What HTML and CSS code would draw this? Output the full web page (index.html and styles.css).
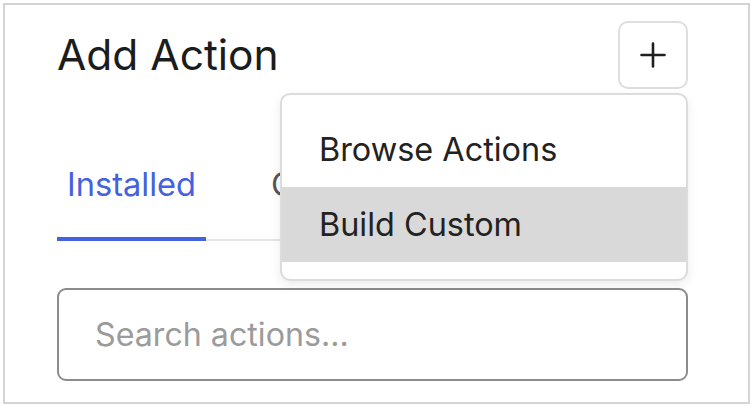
FILE: index.html
```html
<!DOCTYPE html>
<html lang="en">
<head>
<meta charset="utf-8">
<title>Add Action</title>
<link rel="stylesheet" href="styles.css">
</head>
<body>
<div class="frame">
  <div class="header">
    <h1 class="title">Add Action</h1>
    <button class="add-btn" aria-label="Add">
      <svg width="26" height="26" viewBox="0 0 26 26" aria-hidden="true">
        <path d="M13 1.5V24.5M1.5 13H24.5" stroke="#1f1f1f" stroke-width="2.6" stroke-linecap="round" fill="none"/>
      </svg>
    </button>
    <div class="menu">
      <div class="menu-item">Browse Actions</div>
      <div class="menu-item active">Build Custom</div>
    </div>
  </div>
  <div class="tabs">
    <div class="tab selected">Installed</div>
    <div class="tab">Custom</div>
  </div>
  <div class="search">
    <input class="search-input" type="text" placeholder="Search actions...">
  </div>
</div>
</body>
</html>
```
FILE: styles.css
```css
* { box-sizing: border-box; }
html, body { margin: 0; padding: 0; background: #fff; }
body { font-family: Inter, "Noto Sans", sans-serif; color: #1e1e1e; }

.frame {
  margin: 3px;
  width: 747px;
  height: 401px;
  border: 2px solid #d4d4d4;
  padding: 16px 60px 0 52px;
  overflow: hidden;
}

.header {
  position: relative;
  display: flex;
  align-items: center;
  justify-content: space-between;
  height: 68px;
}

.title {
  margin: 0;
  font-size: 42.5px;
  font-weight: 400;
  line-height: 52px;
  color: #1c1c1c;
}

.add-btn {
  width: 70px;
  height: 68px;
  padding: 0;
  border: 2px solid #dedede;
  border-radius: 10px;
  background: #fff;
  display: flex;
  align-items: center;
  justify-content: center;
}

.menu {
  position: absolute;
  top: 72px;
  right: 0;
  width: 408px;
  border: 2px solid #dcdcdc;
  border-radius: 10px;
  background: #fff;
  padding: 17px 0;
  box-shadow: 0 4px 12px rgba(0,0,0,0.08);
  z-index: 2;
  overflow: hidden;
}

.menu-item {
  height: 75px;
  display: flex;
  align-items: center;
  padding-left: 37px;
  font-size: 32.4px;
  color: #222;
}

.menu-item.active { background: #d9d9d9; }

.tabs {
  display: flex;
  gap: 55px;
  margin-top: 75px;
  box-shadow: inset 0 -2px 0 #e6e6e6;
}

.tab {
  padding: 0 10px 33px;
  font-size: 32.6px;
  line-height: 40px;
  color: #555;
  border-bottom: 4px solid transparent;
}

.tab.selected {
  color: #4661de;
  border-bottom-color: #4661de;
}

.search { margin-top: 47px; }

.search-input {
  display: block;
  width: 100%;
  height: 93px;
  border: 2px solid #8c8c8c;
  border-radius: 9px;
  padding: 0 0 0 36px;
  font-family: Inter, "Noto Sans", sans-serif;
  font-size: 32.2px;
  color: #222;
  background: #fff;
  outline: none;
}

.search-input::placeholder { color: #9b9b9b; }
```
